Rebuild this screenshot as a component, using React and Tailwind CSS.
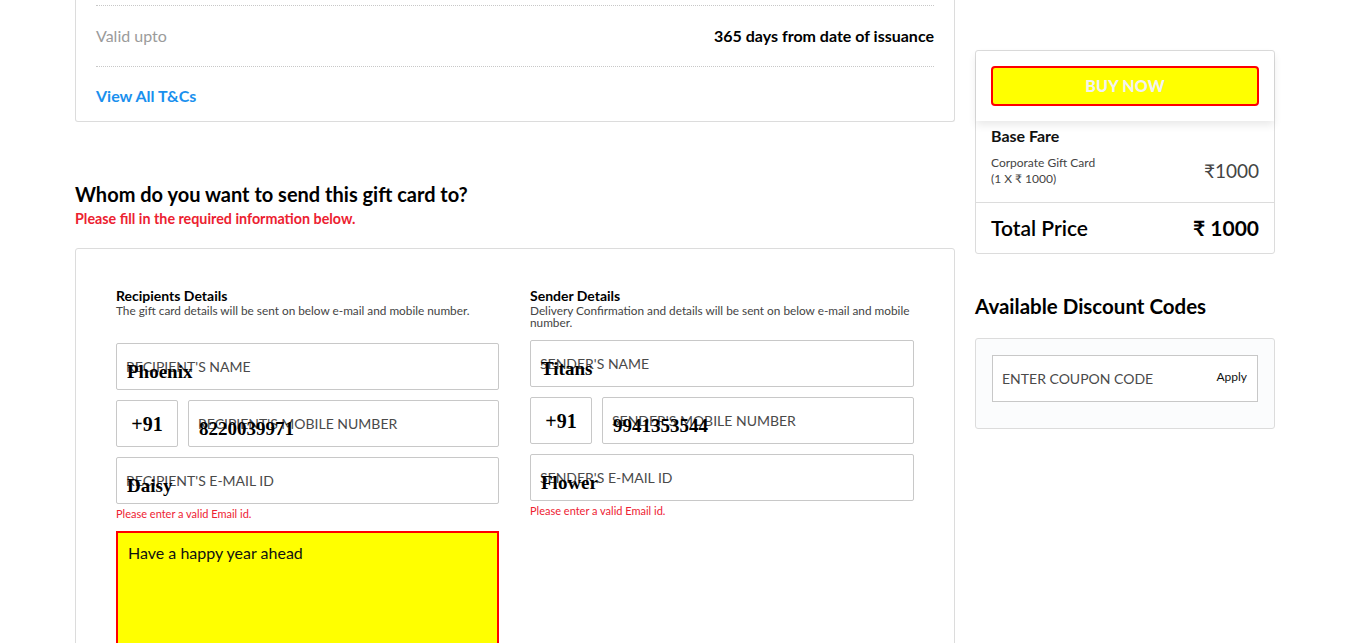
import React from 'react';

const serifValue = { fontFamily: '"Liberation Serif", serif' };

function FloatInput({ label, value }) {
  return (
    <div className="relative h-[47px] border border-[#c8c8c8] rounded-[2px] bg-white">
      <span className="absolute left-[9px] top-[14px] text-[14px] leading-[18px] text-[#4a4a4a] uppercase">{label}</span>
      {value && (
        <span className="absolute left-[10px] top-[17px] text-[19px] leading-[22px] font-bold text-black" style={serifValue}>
          {value}
        </span>
      )}
    </div>
  );
}

function PhoneRow({ label, value }) {
  return (
    <div className="flex gap-[10px]">
      <div className="h-[47px] shrink-0 w-[62px] border border-[#c8c8c8] rounded-[2px] flex items-center justify-center text-[20px] font-bold" style={serifValue}>
        +91
      </div>
      <div className="flex-1">
        <FloatInput label={label} value={value} />
      </div>
    </div>
  );
}

function DetailsColumn({ title, desc, descMb, inputs }) {
  return (
    <div>
      <h3 className="text-[14px] leading-[18px] font-bold text-black">{title}</h3>
      <p className={`text-[11.8px] leading-[12px] text-[#444] ${descMb}`}>{desc}</p>
      <div className="flex flex-col gap-[10px]">
        <FloatInput label={inputs.nameLabel} value={inputs.name} />
        <PhoneRow label={inputs.mobileLabel} value={inputs.mobile} />
        <FloatInput label={inputs.emailLabel} value={inputs.email} />
      </div>
      <p className="mt-[3px] text-[11px] leading-[14px] text-[#ee2233]">Please enter a valid Email id.</p>
    </div>
  );
}

export default function App() {
  return (
    <div className="min-h-[643px] bg-white overflow-hidden text-black" style={{ fontFamily: 'Lato, "Open Sans", sans-serif' }}>
      <div className="ml-[75px] flex gap-[20px] items-start">
        {/* Left column */}
        <div className="w-[880px] shrink-0">
          {/* Gift card terms */}
          <div className="border border-t-0 border-[#dcdcdc] rounded-b-[3px] px-[20px] pt-[5px]">
            <div className="border-t border-dotted border-[#c8c8c8]" />
            <div className="h-[60px] flex items-center justify-between text-[16px]">
              <span className="text-[#9b9b9b]">Valid upto</span>
              <span className="font-bold">365 days from date of issuance</span>
            </div>
            <div className="border-t border-dotted border-[#c8c8c8]" />
            <div className="pt-[19px] pb-[15px]">
              <a className="block text-[16px] leading-[20px] font-bold text-[#1a90ee]">View All T&amp;Cs</a>
            </div>
          </div>

          <h2 className="mt-[58px] text-[20px] leading-[28px] font-bold">Whom do you want to send this gift card to?</h2>
          <p className="mt-[2px] text-[14.3px] leading-[18px] font-bold text-[#ec2130]">Please fill in the required information below.</p>

          {/* Form */}
          <div className="mt-[20px] border border-[#dcdcdc] rounded-[3px] pl-[40px] pr-[40px] pt-[38px] pb-[40px]">
            <div className="grid grid-cols-[383px_384px] gap-[31px]">
              <div>
                <DetailsColumn
                  title="Recipients Details"
                  desc="The gift card details will be sent on below e-mail and mobile number."
                  descMb="mb-[26px]"
                  inputs={{
                    nameLabel: "Recipient's Name",
                    name: 'Phoenix',
                    mobileLabel: "Recipient's Mobile Number",
                    mobile: '8220039971',
                    emailLabel: "Recipient's E-mail ID",
                    email: 'Daisy',
                  }}
                />
                <div className="mt-[10px] h-[130px] border-2 border-[#ff0000] bg-[#ffff00] px-[10px] pt-[9px]">
                  <p className="text-[16px] leading-[22px] text-[#111]">Have a happy year ahead</p>
                </div>
              </div>
              <DetailsColumn
                title="Sender Details"
                desc="Delivery Confirmation and details will be sent on below e-mail and mobile number."
                descMb="mb-[11px]"
                inputs={{
                  nameLabel: "Sender's Name",
                  name: 'Titans',
                  mobileLabel: "Sender's Mobile Number",
                  mobile: '9941353544',
                  emailLabel: "Sender's E-mail ID",
                  email: 'Flower',
                }}
              />
            </div>
          </div>
        </div>

        {/* Right column */}
        <div className="w-[300px] shrink-0 mt-[50px]">
          <div className="border border-[#dcdcdc] rounded-[3px] bg-white">
            <div className="relative px-[15px] py-[15px] shadow-[0_4px_8px_rgba(0,0,0,0.09)] rounded-t-[3px]">
              <button className="w-full h-[40px] bg-[#ffff00] border-2 border-[#ff0000] rounded-[4px] text-[16px] font-black text-[#f2f2f2] tracking-[0.2px]">
                BUY NOW
              </button>
            </div>
            <div className="px-[15px] pt-[5px] pb-[15px] border-b border-[#dcdcdc]">
              <p className="text-[16px] leading-[20px] font-bold text-[#111]">Base Fare</p>
              <div className="mt-[9px] flex items-center justify-between">
                <div className="text-[12px] leading-[16px] text-[#444]">
                  <p>Corporate Gift Card</p>
                  <p>(1 X ₹ 1000)</p>
                </div>
                <span className="text-[19px] leading-[24px] text-[#444]">₹1000</span>
              </div>
            </div>
            <div className="h-[50px] px-[15px] flex items-center justify-between text-[21px]">
              <span className="font-semibold">Total Price</span>
              <span className="font-bold">₹ 1000</span>
            </div>
          </div>

          <h2 className="mt-[38px] text-[20.5px] leading-[28px] font-bold">Available Discount Codes</h2>
          <div className="mt-[18px] border border-[#dcdcdc] rounded-[3px] bg-[#fbfcfd] px-[16px] pt-[16px] pb-[26px]">
            <div className="h-[47px] border border-[#c8c8c8] bg-white flex items-center justify-between pl-[9px] pr-[10px]">
              <span className="text-[14px] text-[#4a4a4a]">ENTER COUPON CODE</span>
              <span className="text-[12px] text-[#111] -mt-[4px]">Apply</span>
            </div>
          </div>
        </div>
      </div>
    </div>
  );
}
